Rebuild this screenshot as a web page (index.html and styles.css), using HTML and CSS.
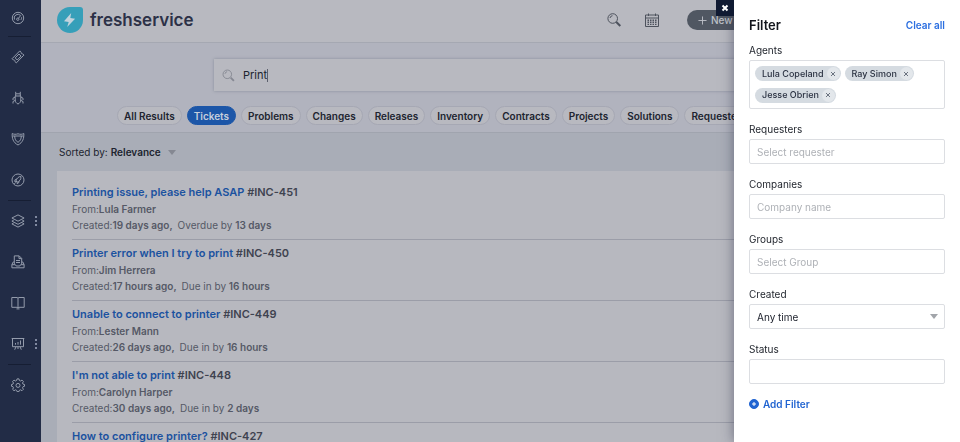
FILE: index.html
```html
<!DOCTYPE html>
<html lang="en">

<head>
    <meta charset="UTF-8">
    <meta name="viewport" content="width=device-width, initial-scale=1">
    <title>Freshservice - Search</title>
    <link rel="stylesheet" href="styles.css">
</head>

<body>

    <nav class="sidebar" aria-label="Main">
        <a href="#" class="nav-item nav-first divider" aria-label="Dashboard">
            <svg viewBox="0 0 14 14"><circle cx="7" cy="7" r="5.7"/><path d="M3.5 8.5a3.7 3.7 0 0 1 6-4.1M10.6 6.3a3.8 3.8 0 0 1-.6 2.5M9.7 4.5 7.4 7.4"/><circle cx="6.8" cy="8.2" r="1.2"/></svg>
        </a>
        <a href="#" class="nav-item" aria-label="Tickets">
            <svg viewBox="0 0 14 14"><path d="M8.8.9 1.1 8.700l1.300 1.300c1-.3 1.800.5 1.500 1.500l1.400 1.400 7.600-7.800-1.300-1.300c-1 .3-1.800-.5-1.500-1.500z"/><path d="M8 4 4.200 7.900l2 2.100L10 6.100z"/></svg>
        </a>
        <a href="#" class="nav-item" aria-label="Problems">
            <svg viewBox="0 0 14 14"><path d="M4.200 5h5.600v4c0 1.800-1.200 3.400-2.800 4-1.600-.6-2.800-2.200-2.800-4zM4.700 5V2.800h4.600V5M4.700 2.800V.8M9.300 2.800V.8M4.200 6 2 7.200V9M9.800 6 12 7.200V9M4.300 9.300 2 10.500v2M9.700 9.300l2.300 1.200v2"/></svg>
        </a>
        <a href="#" class="nav-item" aria-label="Changes">
            <svg viewBox="0 0 14 14"><path d="M1.200 1.500c1.800 1 3.600 1 5.800.3 2.200.7 4 .7 5.800-.3.300 4.900-1 9-5.800 11.500C2.200 10.500.9 6.400 1.200 1.500z"/><path d="M1.500 4h11M3.700 4c0 3 1 5 3.300 6.300C9.300 9 10.300 7 10.300 4"/></svg>
        </a>
        <a href="#" class="nav-item divider" aria-label="Releases">
            <svg viewBox="0 0 14 14"><circle cx="7" cy="7" r="6"/><path d="M9.900 3.300C7.500 3.500 5.600 5.500 5 8l1.100 1.100c2.400-.7 4.300-2.700 3.800-5.800zM5.800 6l-1.600.6-.6 1.800H5M8.200 8.300 7.500 10l-1.400.6V9.100M4.800 9.300l-1.500 1.600"/></svg>
        </a>
        <a href="#" class="nav-item has-more" aria-label="Assets">
            <svg viewBox="0 0 14 14"><path d="M7 .9.900 4 7 7.200 13.100 4zM2.700 6.200.900 7.100 7 10.300l6.100-3.200-1.800-.9M2.700 9 .9 9.900 7 13.100l6.100-3.200-1.800-.9"/></svg>
        </a>
        <a href="#" class="nav-item" aria-label="Purchase orders">
            <svg viewBox="0 0 14 14"><path d="M3.300 9.500V.9h4.900l2.500 2.500v6.100M8 1v2.600h2.600M5 5.500h4M5 7.500h4M3.300 7H2.200L.9 9.500v3.300h12.200V9.500L11.800 7h-1.100M1 9.700h3.400l.8 1.300h3.600l.8-1.300H13"/></svg>
        </a>
        <a href="#" class="nav-item" aria-label="Solutions">
            <svg viewBox="0 0 14 14"><path d="M.8 1.500H6l1 .6 1-.6h5.200v9.800H8l-1 .6-1-.6H.8zM7 2.100v9.800M5.500 12.900h3"/></svg>
        </a>
        <a href="#" class="nav-item has-more divider" aria-label="Reports">
            <svg viewBox="0 0 14 14"><path d="M.7 1.500h12.600M1.500 1.500v8.200h11V1.500M4.500 7.700V6M7 7.700V5M9.500 7.700V3.500M5 9.700l-1.300 3M9 9.700l1.300 3M7 9.700V12"/></svg>
        </a>
        <a href="#" class="nav-item" aria-label="Admin">
            <svg viewBox="0 0 14 14"><path d="m6 .9-.4 1.600-1.100.5-1.500-.9-1.400 1.400.9 1.500-.5 1.100-1.500.4v1.800l1.500.4.5 1.100-.9 1.500L3 12.700l1.500-.9 1.100.5.4 1.300h2l.4-1.300 1.100-.5 1.500.9 1.400-1.400-.9-1.500.5-1.100 1.500-.4V6.500l-1.500-.4-.5-1.100.9-1.500L11 2.100 9.500 3l-1.100-.5L8 .9z"/><circle cx="7" cy="7.400" r="2"/></svg>
        </a>
    </nav>

    <main class="main">
        <header class="topbar">
            <a href="#" class="brand">
                <svg viewBox="0 0 26 26"><path d="M13 0h10a3 3 0 0 1 3 3v10A13 13 0 1 1 13 0z" fill="#369fb9"/><path d="M14.200 6 7 14.300l4.700.8-1.500 4.900 7.900-8.300-4.800-.7z" fill="#c3d3dd"/></svg>
                <span>freshservice</span>
            </a>
            <div class="actions">
                <a href="#" class="action" aria-label="Search">
                    <svg viewBox="0 0 14 14"><circle cx="5.700" cy="5.500" r="4.800"/><path d="M3 5a2.800 2.800 0 0 1 2.500-2.300"/><path d="m9.300 9 4 4" stroke-width="2"/></svg>
                </a>
                <a href="#" class="action" aria-label="Calendar">
                    <svg viewBox="0 0 14 14"><path d="M.5 2h13v11.500H.5zM.5 5h13M3.500 .5v2.500M10.500 .5v2.500"/><path d="M2.500 7.200h9M2.500 9.300h9M2.500 11.400h9" stroke-dasharray="1.500 1" stroke-width="1.400"/></svg>
                </a>
                <button type="button" class="new-btn"><svg viewBox="0 0 10 10"><path d="M5 .5v9M.5 5h9"/></svg>New</button>
            </div>
        </header>

        <section class="search-area">
            <label class="search-box">
                <svg viewBox="0 0 14 14"><circle cx="5.700" cy="5.700" r="4.600"/><path d="M3.200 5.200a2.600 2.600 0 0 1 2.300-2.300"/><path d="m9.300 9.300 3.500 3.500" stroke-width="2"/></svg>
                <input type="text" value="Print" aria-label="Search">
                <span class="caret"></span>
            </label>
            <div class="tabs">
                <button type="button">All Results</button>
                <button type="button" class="active">Tickets</button>
                <button type="button">Problems</button>
                <button type="button">Changes</button>
                <button type="button">Releases</button>
                <button type="button">Inventory</button>
                <button type="button">Contracts</button>
                <button type="button">Projects</button>
                <button type="button">Solutions</button>
                <button type="button">Requesters</button>
            </div>
        </section>

        <section class="results">
            <button type="button" class="sort">Sorted by: <strong>Relevance</strong><span class="arrow"></span></button>
            <div class="list">
                <article class="ticket">
                    <h3><a href="#">Printing issue, please help ASAP</a> #INC-451</h3>
                    <p>From:<strong>Lula Farmer</strong></p>
                    <p>Created:<strong>19 days ago,</strong><span class="due">Overdue by <strong>13 days</strong></span></p>
                </article>
                <article class="ticket">
                    <h3><a href="#">Printer error when I try to print</a> #INC-450</h3>
                    <p>From:<strong>Jim Herrera</strong></p>
                    <p>Created:<strong>17 hours ago,</strong><span class="due">Due in by <strong>16 hours</strong></span></p>
                </article>
                <article class="ticket">
                    <h3><a href="#">Unable to connect to printer</a> #INC-449</h3>
                    <p>From:<strong>Lester Mann</strong></p>
                    <p>Created:<strong>26 days ago,</strong><span class="due">Due in by <strong>16 hours</strong></span></p>
                </article>
                <article class="ticket">
                    <h3><a href="#">I'm not able to print</a> #INC-448</h3>
                    <p>From:<strong>Carolyn Harper</strong></p>
                    <p>Created:<strong>30 days ago,</strong><span class="due">Due in by <strong>2 days</strong></span></p>
                </article>
                <article class="ticket">
                    <h3><a href="#">How to configure printer?</a> #INC-427</h3>
                </article>
            </div>
        </section>
    </main>

    <aside class="filter">
        <button type="button" class="close" aria-label="Close"><svg viewBox="0 0 8 8"><path d="m1.500 1.500 5 5M6.500 1.500l-5 5"/></svg></button>
        <div class="filter-head">
            <h2>Filter</h2>
            <a href="#">Clear all</a>
        </div>

        <div class="field">
            <span class="label" id="agentsLabel">Agents</span>
            <div class="tag-box" role="group" aria-labelledby="agentsLabel">
                <span class="tag">Lula Copeland<button type="button" aria-label="Remove Lula Copeland"><svg viewBox="0 0 6 6"><path d="m1 1 4 4M5 1 1 5"/></svg></button></span>
                <span class="tag">Ray Simon<button type="button" aria-label="Remove Ray Simon"><svg viewBox="0 0 6 6"><path d="m1 1 4 4M5 1 1 5"/></svg></button></span>
                <span class="tag">Jesse Obrien<button type="button" aria-label="Remove Jesse Obrien"><svg viewBox="0 0 6 6"><path d="m1 1 4 4M5 1 1 5"/></svg></button></span>
            </div>
        </div>
        <div class="field">
            <label class="label" for="requesters">Requesters</label>
            <input type="text" id="requesters" placeholder="Select requester">
        </div>
        <div class="field">
            <label class="label" for="companies">Companies</label>
            <input type="text" id="companies" placeholder="Company name">
        </div>
        <div class="field">
            <label class="label" for="groups">Groups</label>
            <input type="text" id="groups" placeholder="Select Group">
        </div>
        <div class="field">
            <label class="label" for="created">Created</label>
            <div class="select-wrap">
                <select id="created">
                    <option>Any time</option>
                </select>
                <span class="arrow"></span>
            </div>
        </div>
        <div class="field">
            <label class="label" for="status">Status</label>
            <input type="text" id="status">
        </div>
        <button type="button" class="add-filter"><svg viewBox="0 0 10 10"><circle cx="5" cy="5" r="4.500"/><path d="M5 3v4M3 5h4"/></svg>Add Filter</button>
    </aside>

</body>

</html>
```
FILE: styles.css
```css
* {
    box-sizing: border-box;
}

body {
    margin: 0;
    display: flex;
    height: 100vh;
    overflow: hidden;
    font-family: Inter, "Liberation Sans", sans-serif;
    font-size: 10px;
    line-height: 14px;
    color: #20242f;
    background-color: #a9adb7;
}

h2,
h3,
p {
    margin: 0;
}

a {
    text-decoration: none;
}

button,
input,
select {
    font: inherit;
    color: inherit;
    margin: 0;
    padding: 0;
    border: none;
    background: none;
}

button {
    cursor: pointer;
}

svg {
    display: block;
    flex: none;
    fill: none;
    stroke: currentColor;
}

strong {
    font-weight: 600;
}

.arrow {
    border-left: 4px solid transparent;
    border-right: 4px solid transparent;
    border-top: 5px solid #858892;
}

/* Sidebar */
.sidebar {
    flex: none;
    width: 41px;
    padding-right: 6px;
    background-color: #222c46;
}

.nav-item {
    position: relative;
    display: flex;
    align-items: center;
    justify-content: center;
    height: 41px;
    color: #949cac;
}

.nav-first {
    height: 36px;
}

.nav-item svg {
    width: 14px;
    height: 14px;
}

.divider::after {
    content: "";
    position: absolute;
    left: 8px;
    right: 4px;
    bottom: -1px;
    height: 1px;
    background-color: #161e33;
}

.has-more::before {
    content: "";
    position: absolute;
    right: -2px;
    top: 16px;
    width: 2px;
    height: 2px;
    background-color: #8089a0;
    box-shadow: 0 4px #8089a0, 0 8px #8089a0;
}

/* Top bar */
.main {
    flex: 1;
    min-width: 0;
}

.topbar {
    display: flex;
    align-items: center;
    justify-content: space-between;
    height: 43px;
    padding: 0 197px 2px 16px;
    background-color: #b8b9c0;
    border-bottom: 1px solid #a5a8b2;
}

.brand {
    display: flex;
    align-items: center;
    gap: 7px;
    font-size: 17px;
    line-height: 24px;
    font-weight: 600;
    color: #2c3147;
}

.brand svg {
    width: 26px;
    height: 26px;
    stroke: none;
}

.actions {
    display: flex;
    align-items: center;
}

.action {
    margin-right: 24px;
    color: #4d525d;
}

.action + .new-btn {
    margin-left: 4px;
}

.action svg {
    width: 14px;
    height: 14px;
}

.new-btn {
    display: flex;
    align-items: center;
    gap: 4px;
    width: 76px;
    height: 20px;
    padding-left: 11px;
    border-radius: 10px;
    font-weight: 500;
    color: #bfc2c9;
    background-color: #505762;
}

.new-btn svg {
    width: 9px;
    height: 9px;
}

/* Search */
.search-area {
    height: 90px;
    padding-top: 16px;
    background-color: #b1b3be;
    border-bottom: 1px solid #a0a4ae;
}

.search-box {
    display: flex;
    align-items: center;
    height: 32px;
    margin: 0 173px 15px;
    padding-left: 8px;
    background-color: #b8b9c0;
    box-shadow: 0 0 3px #898d9b;
}

.search-box svg {
    width: 13px;
    height: 13px;
    margin-right: 8px;
    color: #858892;
}

.search-box input {
    width: 24px;
    field-sizing: content;
    font-size: 11px;
    outline: none;
}

.caret {
    width: 1px;
    height: 13px;
    background-color: #5c606d;
}

.tabs {
    display: flex;
    gap: 5px;
    padding-left: 76px;
}

.tabs button {
    flex: none;
    height: 19px;
    padding: 0 6px;
    border: 1px solid #a6a8b4;
    border-radius: 10px;
    font-weight: 600;
    line-height: 16px;
    background-color: #b8b9c0;
}

.tabs .active {
    color: #c6cfdd;
    border-color: #1c56a8;
    background-color: #1c56a8;
}

/* Results */
.results {
    padding: 12px 16px 0;
}

.sort {
    display: flex;
    align-items: center;
    gap: 3px;
    margin: 0 2px 12px;
}

.sort .arrow {
    margin-left: 4px;
}

.list {
    padding: 0 15px;
    background-color: #b7b8bf;
}

.ticket {
    height: 61px;
    padding-top: 6px;
    border-bottom: 1px solid #9b9da8;
    color: #555966;
}

.ticket:first-child {
    height: 69px;
    padding-top: 14px;
}

.ticket h3 {
    font-size: 11px;
    line-height: 15px;
    font-weight: 600;
    margin-bottom: 1px;
    color: #3f4350;
}

.ticket h3 a {
    color: #1b52a0;
}

.ticket p {
    line-height: 16px;
}

.due {
    margin-left: 5px;
}

/* Filter drawer */
.filter {
    position: fixed;
    top: 0;
    right: 0;
    bottom: 0;
    width: 226px;
    padding: 16px 15px;
    background-color: #fff;
    box-shadow: 0 0 12px rgba(30, 34, 60, 0.5);
}

.close {
    position: absolute;
    top: 0;
    left: -18px;
    display: flex;
    align-items: center;
    justify-content: center;
    width: 18px;
    height: 16px;
    color: #fff;
    background-color: #101a32;
}

.close svg {
    width: 8px;
    height: 8px;
    stroke-width: 2;
}

.filter-head {
    display: flex;
    align-items: center;
    justify-content: space-between;
    height: 18px;
    margin-bottom: 9px;
}

.filter-head h2 {
    font-size: 13px;
    font-weight: 600;
    color: #12151c;
}

.filter-head a {
    font-weight: 600;
    color: #2c6fe0;
}

.field {
    margin-bottom: 13px;
}

.label {
    display: block;
    margin-bottom: 3px;
    color: #23272f;
}

.field input,
.field select {
    display: block;
    width: 100%;
    height: 25px;
    padding: 0 7px;
    border: 1px solid #dcdee2;
    border-radius: 2px;
    background-color: #fff;
}

.field input::placeholder {
    color: #aeb1b6;
}

.field select {
    appearance: none;
}

.select-wrap {
    position: relative;
}

.select-wrap .arrow {
    position: absolute;
    right: 7px;
    top: 10px;
    border-top-color: #a2a5aa;
    pointer-events: none;
}

.tag-box {
    display: flex;
    flex-wrap: wrap;
    gap: 6px 4px;
    padding: 5px;
    min-height: 49px;
    border: 1px solid #dcdee2;
    border-radius: 2px;
}

.tag {
    display: flex;
    align-items: center;
    gap: 3px;
    height: 15px;
    padding: 0 1px 0 7px;
    border-radius: 8px;
    font-size: 9px;
    font-weight: 500;
    color: #2b3242;
    background-color: #d5dbe1;
}

.tag button {
    display: flex;
    align-items: center;
    justify-content: center;
    width: 13px;
    height: 13px;
    border-radius: 50%;
    color: #6b7380;
    background-color: #e3e7eb;
}

.tag svg {
    width: 6px;
    height: 6px;
}

.add-filter {
    display: flex;
    align-items: center;
    gap: 4px;
    font-weight: 600;
    color: #2164d1;
}

.add-filter svg {
    width: 10px;
    height: 10px;
}

.add-filter circle {
    fill: #2164d1;
}

.add-filter path {
    stroke: #fff;
}
```
